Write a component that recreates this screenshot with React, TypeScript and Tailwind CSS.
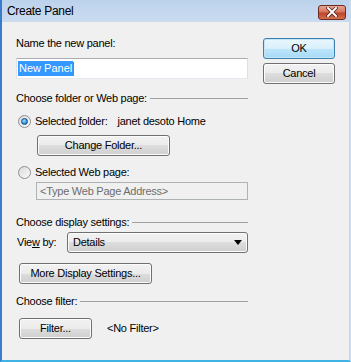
import React, { useState } from 'react';

const font = { fontFamily: '"Liberation Sans", Arial, sans-serif' };

const Btn: React.FC<{ className?: string; primary?: boolean; children: React.ReactNode }> = ({ className = '', primary, children }) => (
  <button
    className={`h-[21px] rounded-[3px] border text-[11px] tracking-[-0.25px] text-black ${
      primary
        ? 'border-[#3c7fb1] bg-[linear-gradient(#eaf6fd_0%,#d9f0fc_50%,#bee6fd_50%,#a7d9f5_100%)] shadow-[inset_0_0_0_1px_#c4e5f6]'
        : 'border-[#707070] bg-[linear-gradient(#f2f2f2_0%,#ebebeb_50%,#dddddd_50%,#cfcfcf_100%)] shadow-[inset_0_0_0_1px_#fcfcfc]'
    } ${className}`}
  >
    {children}
  </button>
);

const Radio: React.FC<{ checked: boolean }> = ({ checked }) => (
  <span className="flex h-[13px] w-[13px] items-center justify-center rounded-full border border-[#8e8f8f] bg-[linear-gradient(135deg,#d9d9d9,#fbfbfb)]">
    {checked && (
      <span className="h-[7px] w-[7px] rounded-full border border-[#1b4f87] bg-[radial-gradient(circle_at_40%_35%,#a7e2ff,#2c8fd9_60%,#105ea8)]" />
    )}
  </span>
);

const Heading: React.FC<{ children: React.ReactNode }> = ({ children }) => (
  <div className="flex items-center h-[13px] leading-[13px]">
    <span className="shrink-0">{children}</span>
    <span className="ml-[3px] h-px flex-1 bg-[#a0a0a0]" />
  </div>
);

export default function App() {
  const [mode, setMode] = useState<'folder' | 'web'>('folder');

  return (
    <div style={font} className="w-[351px] h-[362px] bg-[#f0f0f0] text-[11px] tracking-[-0.25px] text-black overflow-hidden flex flex-col border-l-[2px] border-r-[2px] border-b-[2px] border-l-[#3a7ccc] border-r-[#c7daef] border-b-[#3fb4e4]">
      {/* title bar */}
      <div className="h-[22px] shrink-0 flex items-center justify-between bg-[linear-gradient(#bcd2ec,#cbdcf0)] pl-[5px] pr-[3px]">
        <span className="text-[12px] tracking-[-0.3px] text-[#000]">Create Panel</span>
        <div className="mt-[2px] flex h-[15px] w-[28px] items-center justify-center rounded-[3px] border border-[#6d2b22] bg-[linear-gradient(#e8a493_0%,#d5765f_45%,#c0442a_55%,#d2704e_100%)]">
          <svg width="12" height="10" viewBox="0 0 12 10">
            <path d="M2 1 L10 9 M10 1 L2 9" stroke="#4a1a12" strokeWidth="3.4" strokeLinecap="square" />
            <path d="M2 1 L10 9 M10 1 L2 9" stroke="#ffffff" strokeWidth="2" strokeLinecap="square" />
          </svg>
        </div>
      </div>

      {/* body */}
      <div className="flex flex-1 pl-[14px] pt-[15px]">
        <div className="w-[232px] flex flex-col">
          <div className="h-[13px] leading-[13px]">Name the new panel:</div>
          <div className="mt-[8px] h-[21px] border border-[#abadb3] border-b-[#e3e9ef] border-l-[#e2e3ea] border-r-[#dbdfe6] bg-white flex items-center pl-px">
            <span className="bg-[#3399ff] text-white leading-[15px] px-px tracking-normal">New Panel</span>
            <span className="h-[14px] w-px bg-[#d2691e]" />
          </div>

          <div className="mt-[13px]">
            <Heading>Choose folder or Web page:</Heading>
          </div>

          <div className="mt-[9px] flex items-center h-[14px] pl-[2px] cursor-default" onClick={() => setMode('folder')}>
            <Radio checked={mode === 'folder'} />
            <span className="ml-[4px]">
              Selected <u>f</u>older:
            </span>
            <span className="ml-[10px]">janet desoto Home</span>
          </div>
          <Btn className="mt-[7px] ml-[21px] w-[133px]">Change Folder...</Btn>

          <div className="mt-[9px] flex items-center h-[14px] pl-[2px] cursor-default" onClick={() => setMode('web')}>
            <Radio checked={mode === 'web'} />
            <span className="ml-[4px]">Selected Web page:</span>
          </div>
          <div className="mt-[3px] ml-[20px] h-[18px] border border-[#adb2b5] bg-[#f0f0f0] flex items-center pl-[3px] text-[#6d6d6d]">
            &lt;Type Web Page Address&gt;
          </div>

          <div className="mt-[16px]">
            <Heading>Choose display settings:</Heading>
          </div>
          <div className="mt-[3px] flex items-center">
            <span className="ml-px w-[50px]">
              Vie<u>w</u> by:
            </span>
            <div className="flex-1 h-[21px] rounded-[3px] border border-[#707070] bg-[linear-gradient(#f2f2f2_0%,#ebebeb_50%,#dddddd_50%,#cfcfcf_100%)] shadow-[inset_0_0_0_1px_#fcfcfc] flex items-center justify-between pl-[5px] pr-[5px]">
              <span>Details</span>
              <svg width="8" height="5" viewBox="0 0 8 5">
                <path d="M0 0 H8 L4 5 Z" fill="#000" />
              </svg>
            </div>
          </div>

          <Btn className="mt-[10px] ml-[3px] w-[133px]">More Display Settings...</Btn>

          <div className="mt-[11px]">
            <Heading>Choose filter:</Heading>
          </div>
          <div className="mt-[10px] flex items-center">
            <Btn className="ml-[3px] w-[73px]">Filter...</Btn>
            <span className="ml-[15px]">&lt;No Filter&gt;</span>
          </div>
        </div>

        <div className="ml-[15px] flex flex-col pt-px">
          <Btn primary className="w-[72px] h-[20px]">OK</Btn>
          <Btn className="mt-[4px] w-[72px] h-[18px]">Cancel</Btn>
        </div>
      </div>
    </div>
  );
}
